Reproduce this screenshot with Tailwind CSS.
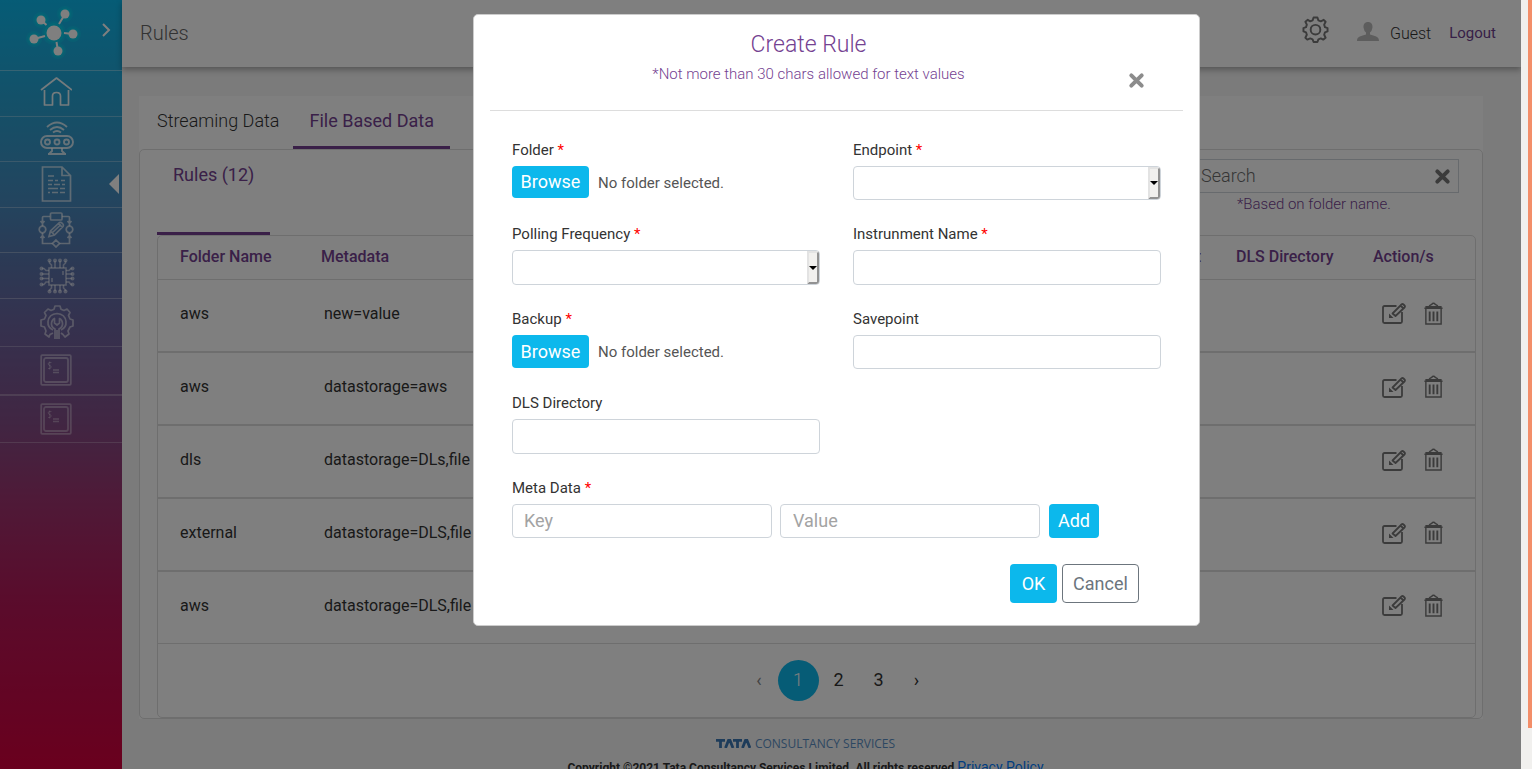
<!DOCTYPE html>
<html lang="en">
<head>
<meta charset="utf-8">
<title>Rules</title>
<meta name="viewport" content="width=device-width, initial-scale=1">
<script src="https://cdn.jsdelivr.net/npm/@tailwindcss/browser@4"></script>
</head>
<body class="relative flex h-screen overflow-hidden bg-[#f6f6f6] font-['Roboto',sans-serif] text-base text-[#333]">

<!-- Icons shared by every table row -->
<svg class="hidden" aria-hidden="true">
  <symbol id="edit" viewBox="0 0 26 26" fill="none" stroke="currentColor" stroke-width="1.8" stroke-linejoin="round">
    <path d="M15.500 6H3.500Q2 6 2 7.500V21.500Q2 23 3.500 23H19.500Q21 23 21 21.500V12"/>
    <path d="M11.500 13.500L20.500 4.500Q21.500 3.500 22.500 4.500L23.500 5.500Q24.500 6.500 23.500 7.500L14.500 16Z M19.500 5.500L22.500 8.500"/>
    <path d="M8 13.500V18H12.500Z" fill="currentColor" stroke="none"/>
  </symbol>
  <symbol id="trash" viewBox="0 0 22 26" fill="none" stroke="currentColor" stroke-width="1.500">
    <path d="M1.500 7.500H20.500M3 7.500V24H19V7.500M2.500 6H19.500M6.500 5.500C7 3.500 8.500 4.500 9 3.500Q11 1 13 3.500C13.500 4.500 15 3.500 15.500 5.500"/>
    <path d="M7 11V21M11 11V21M15 11V21" stroke-width="2"/>
  </symbol>
  <symbol id="cross" viewBox="0 0 18 18" fill="none" stroke="currentColor" stroke-width="4.200" stroke-linecap="round">
    <path d="M3.500 3.500L14.500 14.500M14.500 3.500L3.500 14.500"/>
  </symbol>
  <symbol id="terminal" viewBox="0 0 32 32" fill="none" stroke="currentColor">
    <rect x="1.200" y="1.200" width="29.600" height="29.600" rx="1" stroke-width="1.800"/>
    <rect x="4" y="4" width="24" height="24" rx="2" stroke-width="1.800"/>
    <path d="M11.500 8.500H9.200Q8 8.700 8.200 10T9.500 11.500Q11.300 11.600 11.200 13T9.500 14.500H8M9.700 7.500V15.500" stroke-width=".8"/>
    <path d="M13 16H19M13 18.500H19" stroke-width="1.400"/>
  </symbol>
</svg>

<nav aria-label="Main" class="w-[122px] shrink-0 bg-[linear-gradient(#0cb8ec,#2aa0d0_14%,#468abe_26%,#5874aa_34%,#6a649e_42%,#824c86_55%,#9e3470_65%,#b41858_78%,#d4003c)] text-white">
  <div class="relative flex h-[71px] items-center border-b border-white/35 pl-7">
    <svg class="-mt-1 size-13 overflow-visible" viewBox="0 0 52 52" fill="white" stroke="white" stroke-width="2">
      <g fill="#00f0f0" stroke="none" opacity=".2"><circle cx="26" cy="26" r="12"/><circle cx="37" cy="7" r="8"/><circle cx="13" cy="13" r="8"/><circle cx="6" cy="32" r="8"/><circle cx="45" cy="27" r="8"/><circle cx="30" cy="44" r="8"/></g>
      <g fill="#00f0f0" stroke="none" opacity=".3"><circle cx="26" cy="26" r="10"/><circle cx="37" cy="7" r="6"/><circle cx="13" cy="13" r="6"/><circle cx="6" cy="32" r="6"/><circle cx="45" cy="27" r="6"/><circle cx="30" cy="44" r="6"/></g>
      <path d="M31 17L37 7M18.500 18L13 13M17 29L6 32M36 26L45 27M28.500 35L30 44"/>
      <g stroke="none"><circle cx="26" cy="26" r="7.500"/><circle cx="37" cy="7" r="4.500"/><circle cx="13" cy="13" r="4.500"/><circle cx="6" cy="32" r="4.500"/><circle cx="45" cy="27" r="4.500"/><circle cx="30" cy="44" r="4.500"/></g>
    </svg>
    <button aria-label="Expand menu" class="absolute top-[22px] right-[10px]">
      <svg class="h-4 w-3" viewBox="0 0 12 16" fill="none" stroke="currentColor" stroke-width="2"><path d="M3 2L9 8L3 14"/></svg>
    </button>
  </div>
  <a href="#" aria-label="Home" class="flex h-[46px] items-center border-b border-white/30 pb-1 pl-10 text-white/90">
    <svg class="size-8" viewBox="0 0 32 32" fill="none" stroke="currentColor" stroke-width="1.700" stroke-linejoin="round"><path d="M1 14L16.500 2L32 14M4.500 14V29H12.500V20Q12.500 16.500 16.500 16.500T20.500 20V29H28.500V14"/></svg>
  </a>
  <a href="#" aria-label="Devices" class="flex h-[45px] items-center border-b border-white/30 pb-0.5 pl-10 text-white/75">
    <svg class="h-9 w-[34px]" viewBox="0 0 34 36" fill="none" stroke="currentColor" stroke-width="1.900"><path d="M7 7Q17-2 27 7M10 10Q17 4 24 10M13 12.500Q17 9.500 21 12.500"/><rect x="1" y="16" width="32" height="12" rx="6"/><circle cx="7.500" cy="22" r="2.500"/><circle cx="17" cy="22" r="2.500"/><circle cx="26.500" cy="22" r="2.500"/><path d="M12 28V31L9 34M22 28V31L25 34M8 34H26"/></svg>
  </a>
  <a href="#" aria-label="Rules" aria-current="page" class="relative flex h-[46px] items-center border-b border-white/30 pb-0.5 pl-10 text-white/65">
    <svg class="h-9 w-8" viewBox="0 0 32 36" fill="none" stroke="currentColor" stroke-width="1.700"><path d="M2.500 1H22L30.500 9.500V35H2.500ZM22 1V9.500H30.500"/><path d="M8 10H14M8 14.500H13M15 14.500H18M21 14.500H25M8 18.500H12M14 18.500H20M22 18.500H25M8 22.500H18M20 22.500H25M8 26.500H10M12 26.500H18M20 26.500H25"/></svg>
    <svg class="absolute right-[3px] h-5 w-[10px] text-white" viewBox="0 0 10 20" fill="currentColor"><path d="M10 0V20L0 10Z"/></svg>
  </a>
  <a href="#" aria-label="Workflows" class="flex h-[45px] items-center border-b border-white/30 pl-[38px] text-white/60">
    <svg class="size-9" viewBox="0 0 36 36" fill="none" stroke="currentColor" stroke-width="1.700"><rect x="12.500" y="1" width="11.500" height="7" rx="1"/><path d="M12 4.500H5.500Q4.500 4.500 4.500 5.500V14M24 4.500H30.500Q31.500 4.500 31.500 5.500V14M2.500 9L4.500 11.500L6.500 9M29.500 9L31.500 11.500L33.500 9M4.500 21V31.500H14.500M31.500 21V31.500H21.500M2.500 26L4.500 23.500L6.500 26M29.500 26L31.500 23.500L33.500 26"/><circle cx="4.500" cy="17.500" r="3.300"/><circle cx="31.500" cy="17.500" r="3.300"/><path d="M18 28L21.500 31.500L18 35L14.500 31.500ZM11 24.500L12.500 19L21.500 10.500Q23 10 24.500 11.500T25 14.500L16.500 23ZM12.500 19L16.500 23M14 21L23 12.500M20.500 11.500L24.500 15.500"/></svg>
  </a>
  <a href="#" aria-label="Processing" class="flex h-[46px] items-center border-b border-white/30 pl-[39px] text-white/50">
    <svg class="size-9" viewBox="0 0 36 36" fill="none" stroke="currentColor" stroke-width="1.600"><rect x="10" y="10" width="17" height="17"/><path d="M13 20V24M24 13V17M16 10V3M21 10V3M16 27V33M21 27V33M12.500 10V7L10.500 5V3M24.500 10V7L26.500 5V3M12.500 27V30L10.500 32V33M24.500 27V30L26.500 32V33M10 16H3M10 20.500H3M27 16H33M27 20.500H33M10 12.500H7L5 10.500H3M10 24H7L5 26.500H3M27 12.500H30L32 10.500H33M27 24H30L32 26.500H33"/><g fill="currentColor" stroke="none"><circle cx="10.500" cy="2.500" r="2"/><circle cx="16" cy="2.500" r="2"/><circle cx="21" cy="2.500" r="2"/><circle cx="26.500" cy="2.500" r="2"/><circle cx="10.500" cy="33.500" r="2"/><circle cx="16" cy="33.500" r="2"/><circle cx="21" cy="33.500" r="2"/><circle cx="26.500" cy="33.500" r="2"/><circle cx="2.500" cy="10.500" r="2"/><circle cx="2.500" cy="16" r="2"/><circle cx="2.500" cy="20.500" r="2"/><circle cx="2.500" cy="26.500" r="2"/><circle cx="33.500" cy="10.500" r="2"/><circle cx="33.500" cy="16" r="2"/><circle cx="33.500" cy="20.500" r="2"/><circle cx="33.500" cy="26.500" r="2"/></g></svg>
  </a>
  <a href="#" aria-label="Settings" class="flex h-12 items-center border-b border-white/25 pb-0.5 pl-10 text-white/50">
    <svg class="size-[34px]" viewBox="0 0 34 34" fill="none" stroke="currentColor" stroke-width="1.700" stroke-linejoin="round"><path d="M13 28L10 29.500L9 32L5 29L6 26L4.500 22L1 21V15L4.500 14L6 10.500L4.500 7.500L8 4L11 5.500L14 4.200L15 1H20L21 4.200L24 5.500L27 4L30 7.500L28.500 10.500L30 14L33 15V21L30 22L28 26L29 29L25 32L23 29.500L21 28"/><path d="M13 25Q7.500 22.500 8 16.500Q9 9 17 8.500Q25 9 26 16.500Q26.500 22.500 21 25"/><path d="M15 34V24Q11 22 11.500 18Q12 14.500 14.500 13.500V18L17 20L19.500 18V13.500Q22 14.500 22.500 18Q23 22 19 24V34M17 25V34"/></svg>
  </a>
  <a href="#" aria-label="Console" class="flex h-[49px] items-center border-b-2 border-white/25 pb-0.5 pl-10 text-white/40"><svg class="size-8"><use href="#terminal"/></svg></a>
  <a href="#" aria-label="Terminal" class="flex h-[47px] items-center border-b border-white/25 pl-10 text-white/35"><svg class="size-8"><use href="#terminal"/></svg></a>
</nav>

<main class="flex min-w-0 flex-1 flex-col">
  <header class="flex h-[67px] shrink-0 items-center bg-white pr-[25px] pl-[18px] shadow-[0_3px_6px_rgba(0,0,0,0.3)]">
    <h1 class="flex-1 pb-0.5 text-xl font-light text-[#666]">Rules</h1>
    <button aria-label="Settings" class="mr-7 -mt-2 text-[#777]">
      <svg class="size-[27px]" viewBox="0 0 28 28" fill="none" stroke="currentColor" stroke-width="2" stroke-linejoin="round"><path d="M12 1.500H16L17 4.500L19.500 5.500L22.500 4L24.500 6L23 9L23.800 11.500L26.500 12.500V16L23.800 17L23 19.500L24.500 22.500L22 24.500L19.500 23.200L17 24.200L16 27H12L11 24.200L8.500 23.200L5.500 24.500L3.500 22.500L5 19.500L4.200 17L1.500 16V12.500L4.200 11.500L5 9L3.500 6L6 4L8.500 5.500L11 4.500Z"/><circle cx="14" cy="14.200" r="5"/></svg>
    </button>
    <svg class="mr-[11px] -mt-1 h-5 w-[22px] text-[#bbb]" viewBox="0 0 22 20" fill="currentColor"><path d="M11 0C14 0 15.800 2.200 15.500 5.500Q15 9 13 10.500V12.500C17.500 14 22 14 22 19H0C0 14 4.500 14 9 12.500V10.500Q7 9 6.500 5.500C6.200 2.200 8 0 11 0Z"/></svg>
    <span class="mr-[18px] font-light">Guest</span>
    <a href="#" class="text-[15px] text-[#6f3f8f]">Logout</a>
  </header>

  <section class="mt-[29px] mr-[38px] ml-[17px] bg-white">
    <div class="flex h-[53px] items-stretch pl-[18px] text-lg">
      <button class="mr-[14px] pb-1 font-light">Streaming Data</button>
      <button class="border-b-3 border-[#744191] px-4 pb-px text-[#744191]">File Based Data</button>
    </div>
    <div class="rounded-[5px] border border-[#ddd] px-[17px] pr-[6px]">
      <div class="flex h-[85px] items-stretch justify-between">
        <h2 class="border-b-3 border-[#744191] px-4 pt-[11px] text-lg text-[#744191]">Rules (12)</h2>
        <div class="relative mr-[17px] w-[270px] pt-[9px]">
          <input type="text" placeholder="Search" aria-label="Search rules by folder name" class="block h-[34px] w-full border border-[#ced4da] pb-0.5 pl-[11px] text-lg font-light placeholder:text-[#6b6b6b]">
          <button aria-label="Clear search" class="absolute top-[18px] right-2 text-[#777]"><svg class="block size-[17px]"><use href="#cross"/></svg></button>
          <p class="pl-12 text-[15px] leading-[23px] font-light text-[#744191]">*Based on folder name.</p>
        </div>
      </div>
      <div class="rounded-[5px] border border-[#ddd]">
        <table class="w-full table-fixed text-left">
          <thead>
            <tr class="h-[43px] border-b border-[#ddd] text-[#744191]">
              <th class="w-[140px] pl-[22px] font-medium">Folder Name</th>
              <th class="w-[300px] pl-[23px] font-medium">Metadata</th>
              <th class="pr-[35px] text-right font-medium">Savepoint</th>
              <th class="w-[137px] font-medium">DLS Directory</th>
              <th class="w-[102px] font-medium">Action/s</th>
            </tr>
          </thead>
          <tbody id="rows"></tbody>
        </table>
        <nav aria-label="Pages" class="flex h-[73px] items-center justify-center pl-[42px] text-lg">
          <button class="w-[37px] text-[#888]" aria-label="Previous" disabled>‹</button>
          <button class="size-[41px] rounded-full bg-[#0cb8ec] font-light text-white">1</button>
          <button class="w-10">2</button>
          <button class="w-10">3</button>
          <button class="w-9" aria-label="Next">›</button>
        </nav>
      </div>
    </div>
  </section>

  <footer class="mt-4 flex flex-col items-center pr-[32px] text-center">
    <p class="flex items-center gap-1 font-['Open_Sans',sans-serif] text-xs leading-[18px] font-medium whitespace-nowrap text-[#5b8fc4]">
      <svg class="h-[9px] w-[35px]" viewBox="0 0 35 9" aria-label="TATA" role="img" fill="none" stroke="#3d79b5" stroke-width="2.800"><path d="M0 1.400H9M4.500 1V9M9.500 9L12.500 1.500H14L17 9M17 1.400H26M21.500 1V9M26.500 9L29.500 1.500H31L34 9"/></svg>
      <span>CONSULTANCY SERVICES</span>
    </p>
    <p class="mt-1 text-xs leading-5 font-bold whitespace-nowrap">Copyright ©2021 Tata Consultancy Services Limited. All rights reserved <a href="#" class="text-sm leading-5 font-normal text-[#007bff]">Privacy Policy</a></p>
  </footer>
</main>

<div class="w-[11px] shrink-0 bg-[#f1f0ee]"><div class="ml-auto h-[728px] w-1 bg-[#f38e69]"></div></div>

<!-- Backdrop and dialog -->
<div class="absolute inset-y-0 right-[11px] left-0 flex items-start justify-center bg-black/50 pt-[14px] pl-[152px]">
  <form role="dialog" aria-labelledby="dialog-title" class="w-[727px] rounded-[5px] border border-[#ccc] bg-white px-4 pb-[22px]">
    <div class="relative h-24 border-b border-[#ddd] pt-[14px] pr-14 text-center text-[#744191]">
      <h2 id="dialog-title" class="text-[23px] leading-8 font-light">Create Rule</h2>
      <p class="text-[15px] leading-[26px] font-light">*Not more than 30 chars allowed for text values</p>
      <button type="button" aria-label="Close" class="absolute top-[57px] right-[38px] text-[#8c8c8c]"><svg class="block size-[17px]"><use href="#cross"/></svg></button>
    </div>
    <div class="grid grid-cols-2 gap-x-[33px] px-[22px] pt-7 text-[15px]">
      <div class="h-[84px]">
        <label for="folder" class="block leading-[22px]">Folder <span class="text-[#f00]">*</span></label>
        <div class="mt-[5px] flex items-center gap-[9px]"><button type="button" id="folder" class="h-8 w-[77px] rounded bg-[#0cb8ec] text-lg text-white">Browse</button><span class="pt-0.5 text-[#555]">No folder selected.</span></div>
      </div>
      <div class="h-[84px]">
        <label for="endpoint" class="block leading-[22px]">Endpoint <span class="text-[#f00]">*</span></label>
        <div class="relative mt-[5px]">
          <select id="endpoint" class="block h-[34px] w-full appearance-none rounded border border-[#ced4da] bg-white"><option></option></select>
          <span class="pointer-events-none absolute inset-y-px right-px flex w-3 items-center justify-center rounded-r-[3px] border-2 border-[#e3e3e3] border-r-[#929292] border-b-[#929292] bg-[#f1f0ee]"><svg class="h-1 w-2 shrink-0" viewBox="0 0 8 4"><path d="M0 0H8L4 4Z"/></svg></span>
        </div>
      </div>
      <div class="h-[84px]">
        <label for="polling" class="block leading-[22px]">Polling Frequency <span class="text-[#f00]">*</span></label>
        <div class="relative mt-[5px]">
          <select id="polling" class="block h-[35px] w-full appearance-none rounded border border-[#ced4da] bg-white"><option></option></select>
          <span class="pointer-events-none absolute inset-y-px right-px flex w-3 items-center justify-center rounded-r-[3px] border-2 border-[#e3e3e3] border-r-[#929292] border-b-[#929292] bg-[#f1f0ee]"><svg class="h-1 w-2 shrink-0" viewBox="0 0 8 4"><path d="M0 0H8L4 4Z"/></svg></span>
        </div>
      </div>
      <div class="h-[84px]">
        <label for="instrument" class="block leading-[22px]">Instrunment Name <span class="text-[#f00]">*</span></label>
        <input id="instrument" type="text" class="mt-[5px] block h-[35px] w-full rounded border border-[#ced4da] px-3">
      </div>
      <div class="h-[85px] pt-px">
        <label for="backup" class="block leading-[22px]">Backup <span class="text-[#f00]">*</span></label>
        <div class="mt-[5px] flex items-center gap-[9px]"><button type="button" id="backup" class="h-[33px] w-[77px] rounded bg-[#0cb8ec] text-lg text-white">Browse</button><span class="pt-0.5 text-[#555]">No folder selected.</span></div>
      </div>
      <div class="h-[85px] pt-px">
        <label for="savepoint" class="block leading-[22px]">Savepoint</label>
        <input id="savepoint" type="text" class="mt-[5px] block h-[34px] w-full rounded border border-[#ced4da] px-3">
      </div>
      <div class="h-[84px]">
        <label for="dls" class="block leading-[22px]">DLS Directory</label>
        <input id="dls" type="text" class="mt-[5px] block h-[35px] w-full rounded border border-[#ced4da] px-3">
      </div>
    </div>
    <div class="px-[22px] pt-px text-[15px]">
      <label for="key" class="block leading-[22px]">Meta Data <span class="text-[#f00]">*</span></label>
      <div class="mt-[5px] flex gap-2 text-lg">
        <input id="key" type="text" placeholder="Key" class="h-[34px] w-[260px] rounded border border-[#ced4da] px-[11px] pb-0.5 placeholder:text-[#a3a3a3]">
        <input type="text" placeholder="Value" aria-label="Value" class="h-[34px] w-[260px] rounded border border-[#ced4da] px-3 pb-0.5 placeholder:text-[#a3a3a3]">
        <button type="button" class="ml-px h-[34px] w-[50px] rounded bg-[#0cb8ec] text-white">Add</button>
      </div>
    </div>
    <div class="mt-[26px] flex justify-end gap-[5px] pr-11 text-lg">
      <button type="submit" class="h-[39px] w-[47px] rounded bg-[#0cb8ec] text-white">OK</button>
      <button type="button" class="h-[39px] w-[77px] rounded border border-[#6c757d] text-[#6c757d]">Cancel</button>
    </div>
  </form>
</div>

<script>
  const rules = [
    ["aws", "new=value"],
    ["aws", "datastorage=aws"],
    ["dls", "datastorage=DLs,file"],
    ["external", "datastorage=DLS,file"],
    ["aws", "datastorage=DLS,file"]
  ];
  document.getElementById("rows").innerHTML = rules.map(([folder, meta]) => `
    <tr class="h-[73px] border-b-2 border-[#ddd] last:h-[72px] last:border-b">
      <td class="pb-[3px] pl-[22px]">${folder}</td>
      <td class="pb-[3px] pl-[26px]">${meta}</td>
      <td></td>
      <td></td>
      <td><div class="flex items-center gap-4 pb-1 pl-2 text-[#777]">
        <button aria-label="Edit"><svg class="block size-[26px]"><use href="#edit"/></svg></button>
        <button aria-label="Delete"><svg class="block h-[25px] w-[21px]"><use href="#trash"/></svg></button>
      </div></td>
    </tr>`).join("");
</script>
</body>
</html>
